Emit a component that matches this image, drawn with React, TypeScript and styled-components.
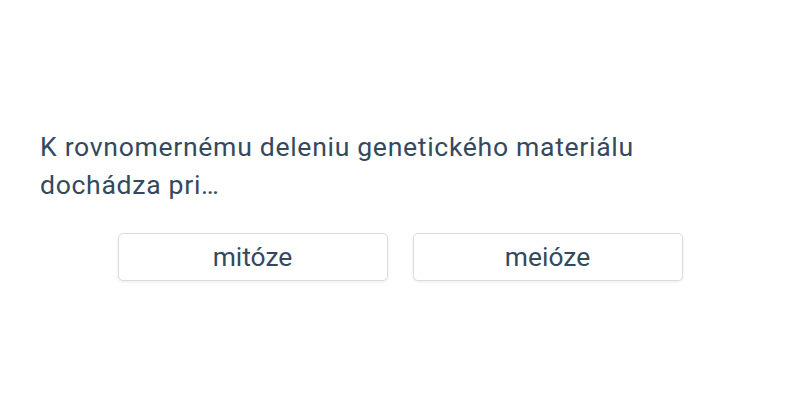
import React from "react";
import styled, { createGlobalStyle } from "styled-components";

const Global = createGlobalStyle`
  html, body { margin: 0; padding: 0; background: #ffffff; }
  body { font-family: Roboto, "Noto Sans", sans-serif; }
`;

const Page = styled.div`
  width: 800px;
  height: 400px;
  box-sizing: border-box;
  padding: 128px 40px 0 40px;
  display: flex;
  flex-direction: column;
`;

const Question = styled.p`
  margin: 0;
  max-width: 660px;
  font-size: 26.6px;
  line-height: 38px;
  letter-spacing: 0.68px;
  color: #34495e;
`;

const Options = styled.div`
  display: flex;
  justify-content: center;
  gap: 25px;
  margin-top: 29px;
`;

const Option = styled.button`
  width: 270px;
  height: 48px;
  box-sizing: border-box;
  background: #fff;
  border: 1px solid #dcdcdc;
  border-radius: 5px;
  box-shadow: 0 1px 3px rgba(0, 0, 0, 0.08);
  font-family: Roboto, "Noto Sans", sans-serif;
  font-size: 26.4px;
  color: #34495e;
  cursor: pointer;
  padding: 0;
`;

export default function App() {
  return (
    <>
      <Global />
      <Page>
        <Question>K rovnomernému deleniu genetického materiálu dochádza pri…</Question>
        <Options>
          <Option>mitóze</Option>
          <Option>meióze</Option>
        </Options>
      </Page>
    </>
  );
}
